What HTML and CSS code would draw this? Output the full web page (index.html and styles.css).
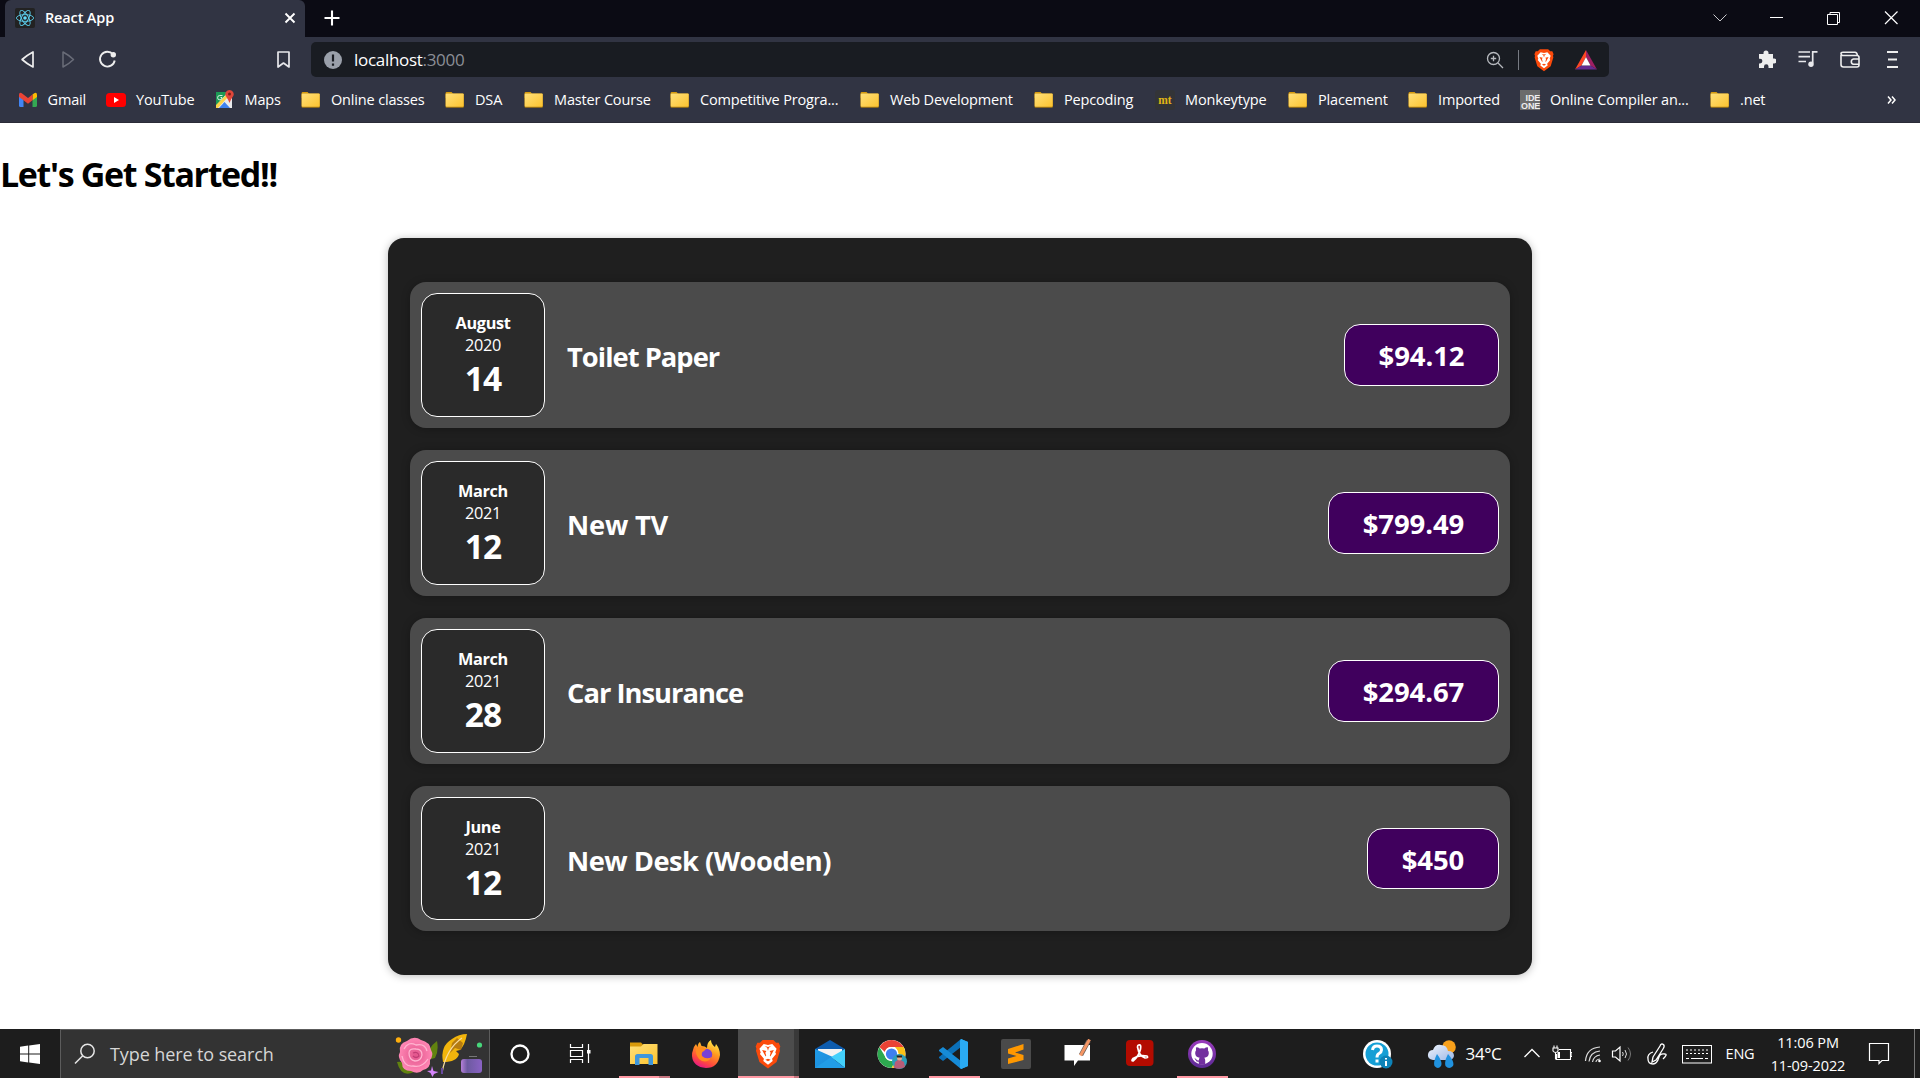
FILE: index.html
```html
<!DOCTYPE html>
<html lang="en">
<head>
<meta charset="utf-8">
<title>React App</title>
<link rel="stylesheet" href="styles.css">
</head>
<body>
<svg class="defs" width="0" height="0">
  <defs>
    <linearGradient id="gFolder" x1="0" y1="0" x2="1" y2="1"><stop offset="0" stop-color="#ffe07a"/><stop offset="1" stop-color="#fcc32f"/></linearGradient>
    <linearGradient id="gFox" x1=".8" y1="0" x2=".3" y2="1"><stop offset="0" stop-color="#fff44f"/><stop offset=".4" stop-color="#ff9a1f"/><stop offset=".75" stop-color="#ff4a3d"/><stop offset="1" stop-color="#e3168a"/></linearGradient>
    <linearGradient id="gMail" x1="0" y1="0" x2="1" y2="1"><stop offset="0" stop-color="#1f9be8"/><stop offset="1" stop-color="#1b8ad8"/></linearGradient>
    <linearGradient id="gHub" x1="0" y1="0" x2="0" y2="1"><stop offset="0" stop-color="#9a3bbd"/><stop offset="1" stop-color="#5c2a94"/></linearGradient>
    <radialGradient id="gRose"><stop offset="0" stop-color="#e2558c"/><stop offset="1" stop-color="#ff86b4"/></radialGradient>
    <linearGradient id="gInk" x1="0" y1="0" x2="1" y2="0"><stop offset="0" stop-color="#b57fd9"/><stop offset=".3" stop-color="#6d5aa0"/><stop offset="1" stop-color="#8a62c4"/></linearGradient>
    <linearGradient id="gCloud" x1="0" y1="0" x2="1" y2="1"><stop offset="0" stop-color="#eef4fc"/><stop offset="1" stop-color="#9fb8e6"/></linearGradient>
    <symbol id="folder" viewBox="0 0 20 20"><path d="M.6 3.200Q.6 2 1.800 2H6.600L8.300 4V8H.6z" fill="#d99c0b"/><rect x=".5" y="3.600" width="18.400" height="14.200" rx="1.200" fill="#a97a12"/><rect x=".7" y="3.600" width="18" height="13.200" rx="1" fill="url(#gFolder)"/></symbol>
    <symbol id="lion" viewBox="0 0 24 28"><path d="M7 1H17L19.500 3.500 22 3.500 23.500 7 22.800 9 23.200 11 20 21.500 12 27.500 4 21.500.8 11 1.200 9 .5 7 2 3.500 4.500 3.500z" fill="#fb4a0b"/><path d="M12 5.500 8 4.700 4 9 5.200 12.500 4.500 14 8.200 18.500 7.600 20.500 12 24 16.400 20.500 15.800 18.500 19.500 14 18.800 12.500 20 9 16 4.700z" fill="#fff"/><path d="M6.500 10.300 10.500 11.300 9.500 12.800 10.300 15.500 9.800 16.300 8 13zM17.500 10.300 13.500 11.300 14.500 12.800 13.700 15.500 14.200 16.300 16 13zM9.500 19.300 12 18.500 14.500 19.300 12 20.800zM9 6.600 12 7.400 15 6.600 12.800 8.200 12 11 11.200 8.200z" fill="#fb4a0b"/></symbol>
  </defs>
</svg>

<header class="titlebar">
  <div class="tab">
    <svg class="tab-logo" viewBox="0 0 20 20"><rect width="20" height="20" rx="2" fill="#222"/><g fill="none" stroke="#5ccfee" stroke-width=".9"><ellipse cx="10" cy="10" rx="8.600" ry="3.400"/><ellipse cx="10" cy="10" rx="8.600" ry="3.400" transform="rotate(60 10 10)"/><ellipse cx="10" cy="10" rx="8.600" ry="3.400" transform="rotate(120 10 10)"/></g><circle cx="10" cy="10" r="1.800" fill="#61dafb"/></svg>
    <span class="tab-title">React App</span>
    <svg class="tab-close" viewBox="0 0 12 12"><path d="M1.500 1.500 10.500 10.500M10.500 1.500 1.500 10.500" stroke="#fff" stroke-width="1.900"/></svg>
  </div>
  <svg class="new-tab" viewBox="0 0 16 16"><path d="M8 .5V15.500M.5 8H15.500" stroke="#fff" stroke-width="2.100"/></svg>
  <div class="window-buttons">
    <svg viewBox="0 0 16 16"><path d="M1.500 4.500 8 11 14.500 4.500" fill="none" stroke="#c8c8cc"/></svg>
    <svg viewBox="0 0 16 16"><path d="M1 7.500H14" stroke="#fff"/></svg>
    <svg viewBox="0 0 16 16"><path d="M1.500 4.500H11.500V14.500H1.500zM4 4V2.500H13.500V12.500H12" fill="none" stroke="#fff"/></svg>
    <svg viewBox="0 0 16 16"><path d="M2 1.500 14.500 14M14.500 1.500 2 14" stroke="#fff" stroke-width="1.200"/></svg>
  </div>
</header>

<nav class="toolbar">
  <div class="nav-buttons">
    <svg viewBox="0 0 20 20"><path d="M15 2V17Q8.500 13.500 4.100 9.500 8.500 5.500 15 2z" fill="none" stroke="#eee" stroke-width="1.700" stroke-linejoin="round"/></svg>
    <svg viewBox="0 0 20 20"><path d="M5 2V17Q11.500 13.500 15.500 9.500 11.500 5.500 5 2z" fill="none" stroke="#696c78" stroke-width="1.500" stroke-linejoin="round"/></svg>
    <svg viewBox="0 0 20 20"><path d="M15 4.300A7.400 7.400 0 1 0 16.700 10.500" fill="none" stroke="#eee" stroke-width="1.900"/><circle cx="15.300" cy="4.700" r="2.700" fill="#eee"/></svg>
    <svg class="bookmark-toggle" viewBox="0 0 20 20"><path d="M4 2H15V17L9.500 13 4 17z" fill="none" stroke="#e8e8ec" stroke-width="1.700" stroke-linejoin="round"/></svg>
  </div>
  <div class="address">
    <svg class="info" viewBox="0 0 18 18"><circle cx="9" cy="9" r="9" fill="#9aa0aa"/><path d="M9 3.500V10.500M9 12.500V14.800" stroke="#191c22" stroke-width="2.200"/></svg>
    <span class="url">localhost<span class="port">:3000</span></span>
    <svg class="magnifier" viewBox="0 0 18 18"><g fill="none" stroke="#b6b9be" stroke-width="1.300"><circle cx="7.500" cy="7.500" r="6"/><path d="M12 12 17 17M7.500 4.800V10.200M4.800 7.500H10.200"/></g></svg>
    <span class="divider"></span>
    <svg class="shields"><use href="#lion"/></svg>
    <svg class="bat" viewBox="0 0 22 20"><path d="M11 0 0 19.500 6.500 15.500 11 7z" fill="#ff4724"/><path d="M11 0 22 19.500 15.500 15.500 11 7z" fill="#9e1f63"/><path d="M0 19.500 6.500 15.500H15.500L22 19.500z" fill="#662d91"/><path d="M11 7 15.500 15.500H6.500z" fill="#fff"/></svg>
  </div>
  <div class="extensions">
    <svg viewBox="0 0 20 20"><path d="M3 4H7.500V3A2.500 2.500 0 0 1 12.500 3V4H17V8.500H18A2.500 2.500 0 0 1 18 13.500H17V18H12.500V16.500A2.200 2.200 0 0 0 8 16.500V18H3V13.500H4A2.300 2.300 0 0 0 4 8.700H3z" fill="#eee"/></svg>
    <svg viewBox="0 0 20 20"><path d="M.5 2H12M.5 6.700H12M.5 11.500H8M14.700 13.500V1.800H19.500" fill="none" stroke="#e8e8ec" stroke-width="1.700"/><circle cx="13" cy="14.200" r="2.700" fill="#e8e8ec"/></svg>
    <svg viewBox="0 0 20 20"><path d="M1 5V14.500Q1 17 3.500 17H17Q19 17 19 15V7.500Q19 5.500 17 5.500H2.500Q1 5 1 3.800 1 2.300 3 2.300H15Q17 2.300 17.500 5.500M19 9H13.500A2.700 2.700 0 0 0 13.500 14.300H19" fill="none" stroke="#eee" stroke-width="1.600"/></svg>
    <svg viewBox="0 0 20 20"><path d="M5 2H16M6 9.500H15M5 17H16" stroke="#eee" stroke-width="1.800"/></svg>
  </div>
</nav>

<nav class="bookmarks">
  <a class="bm near"><svg viewBox="0 0 20 20"><path d="M0 4.500 4.500 8V17H1.500Q0 17 0 15.500z" fill="#4285f4"/><path d="M18 4.500 13.500 8V17H16.500Q18 17 18 15.500z" fill="#34a853"/><path d="M13.500 4.500 15.200 3.200Q18 2 18 5V7L13.500 10.300z" fill="#fbbc04"/><path d="M0 7V5Q0 2 2.800 3.200L9 8 13.500 4.500V10.300L9 13.700 4.500 10.300z" fill="#ea4335"/></svg><span>Gmail</span></a>
  <a class="bm"><svg viewBox="0 0 20 20"><rect y="3" width="20" height="14" rx="3.500" fill="#f00"/><path d="M8 7 13 10 8 13z" fill="#fff"/></svg><span>YouTube</span></a>
  <a class="bm near"><svg viewBox="0 0 20 20"><rect y="2" width="16" height="16" fill="#e8eaed"/><path d="M0 2H12L0 16z" fill="#1c9a55"/><path d="M0 15 12 3V7L2 18H0z" fill="#fcd34a"/><path d="M3 18 8.500 12 14 18z" fill="#3f82f0"/><path d="M6.500 5.500H3.800A2.200 2.200 0 1 0 6 7.500H4.500" fill="none" stroke="#d9f0e2"/><path d="M13.500 0A4.200 4.200 0 0 1 17.500 5.500Q14.500 10 13.500 13 12.500 10 9.500 5.500A4.200 4.200 0 0 1 13.500 0" fill="#e0473a"/><circle cx="13.500" cy="4" r="1.500" fill="#7d1e18"/></svg><span>Maps</span></a>
  <a class="bm"><svg><use href="#folder"/></svg><span>Online classes</span></a>
  <a class="bm"><svg><use href="#folder"/></svg><span>DSA</span></a>
  <a class="bm"><svg><use href="#folder"/></svg><span>Master Course</span></a>
  <a class="bm"><svg><use href="#folder"/></svg><span>Competitive Progra...</span></a>
  <a class="bm"><svg><use href="#folder"/></svg><span>Web Development</span></a>
  <a class="bm"><svg><use href="#folder"/></svg><span>Pepcoding</span></a>
  <a class="bm"><b class="mt">mt</b><span>Monkeytype</span></a>
  <a class="bm"><svg><use href="#folder"/></svg><span>Placement</span></a>
  <a class="bm"><svg><use href="#folder"/></svg><span>Imported</span></a>
  <a class="bm"><b class="ideone"><i>IDE</i><i>ONE</i></b><span>Online Compiler an...</span></a>
  <a class="bm"><svg><use href="#folder"/></svg><span>.net</span></a>
  <svg class="overflow" viewBox="0 0 10 10"><path d="M1 1.500 4 5 1 8.500M5 1.500 8 5 5 8.500" fill="none" stroke="#fff" stroke-width="1.500"/></svg>
</nav>

<main class="page">
  <h1>Let's Get Started!!</h1>
  <section class="expenses">
    <article class="item">
      <div class="date"><div class="month">August</div><div class="year">2020</div><div class="day">14</div></div>
      <h2 class="tight">Toilet Paper</h2><div class="price w6">$94.12</div>
    </article>
    <article class="item">
      <div class="date"><div class="month">March</div><div class="year">2021</div><div class="day">12</div></div>
      <h2 class="loose">New TV</h2><div class="price w7">$799.49</div>
    </article>
    <article class="item">
      <div class="date"><div class="month">March</div><div class="year">2021</div><div class="day">28</div></div>
      <h2 class="tight">Car Insurance</h2><div class="price w7">$294.67</div>
    </article>
    <article class="item">
      <div class="date"><div class="month">June</div><div class="year">2021</div><div class="day">12</div></div>
      <h2>New Desk (Wooden)</h2><div class="price w4">$450</div>
    </article>
  </section>
</main>

<footer class="taskbar">
  <div class="start"><svg width="20" height="20" viewBox="0 0 20 20"><path d="M0 2.800 8.200 1.600V9.400H0zM9.200 1.500 20 0V9.400H9.200zM0 10.500H8.200V18.400L0 17.200zM9.200 10.500H20V20L9.200 18.500z" fill="#fff"/></svg></div>
  <div class="search">
    <svg width="22" height="22" viewBox="0 0 22 22"><circle cx="13.500" cy="8" r="6.700" fill="none" stroke="#e6e6e6" stroke-width="1.500"/><path d="M8.700 12.800 1 20.500" stroke="#e6e6e6" stroke-width="1.500"/></svg>
    <span>Type here to search</span>
    <svg class="flowers" width="90" height="46" viewBox="0 0 90 46"><circle cx="4.500" cy="9" r="2.700" fill="#ffae0d"/><circle cx="85.500" cy="14" r="2.600" fill="#47d77b"/><path d="M43 10Q45 20 41 27L33 29Q33 17 43 10M3 31Q12 29 20 41 7 47 3 31" fill="#61820f"/><path d="M13 10Q20 4 27 9 36 11 37 19 40 24 36 29 37 37 29 39 24 44 17 40 8 40 8 32 3 26 6 21 4 13 13 10" fill="url(#gRose)"/><g fill="none" stroke="#ffb4d0" stroke-width="1.300"><path d="M10 18Q14 10 22 14 31 12 33 20M8 25Q10 36 19 35 28 37 34 28M15 22Q15 17 22 18 28 18 28 24 27 30 21 30 15 29 15 22"/></g><path d="M19 22Q24 20 25 25 22 28 19 25" fill="none" stroke="#c23c75" stroke-width="1.200"/><path d="M38 35 39.500 40 44.500 41 40 43 38.500 46 36.500 42 33 40 37 39.500z" fill="#d585fb"/><path d="M49 31Q46 15 58 8 65 3 73 3 71 14 66 19L62 20 65 23Q63 31 49 31" fill="#f2b50c"/><path d="M58 12 63 7 69 12 67 19 61 17 56 22z" fill="#b67c10"/><path d="M68 7Q52 18 48 42" fill="none" stroke="#f8dda0" stroke-width="1.200"/><path d="M48 37V43" stroke="#694aa0" stroke-width="2"/><path d="M75 25.500H83" stroke="#777"/><rect x="67" y="28" width="21" height="14" rx="3" fill="url(#gInk)"/></svg>
  </div>
  <div class="apps">
    <div class="app"><svg viewBox="0 0 30 30"><circle cx="15" cy="15" r="8.500" fill="none" stroke="#fff" stroke-width="2.300"/></svg></div>
    <div class="app"><svg viewBox="0 0 30 30"><path d="M3.500 5V8.500H15.500V5M3.500 24V20.500H15.500V24M3.500 11.500H15.500V17.500H3.500zM21.500 5V24" fill="none" stroke="#fff" stroke-width="1.200"/><rect x="20" y="11" width="3.500" height="3.500" fill="#fff"/></svg></div>
    <div class="app open split"><svg viewBox="0 0 30 30"><path d="M1 3.500H12L14 5.500V8H1z" fill="#d99a0a"/><path d="M1 7.500H12L14.500 5H28.500V25H1z" fill="url(#gFolder)"/><path d="M6 26V17.500Q6 15 8.500 15H21.500Q24 15 24 17.500V26H19.500V19H10.500V26z" fill="#3f97dc"/></svg></div>
    <div class="app"><svg viewBox="0 0 30 30"><path d="M2 11Q3 7 5 5L6.500 8Q7 4 9 3L10.500 7Q14 7 16 9 16 3 20 1 20 5 24 8L25 5Q29 10 29 16 27 29 15 29 2 28 1 17 1 13 2 11" fill="url(#gFox)"/><circle cx="15.500" cy="15.500" r="5.700" fill="#7841d5"/><path d="M5 9Q10 6 15 10L13 12Q10 13 11 17 15 21 21 18 15 26 8 20 4 15 5 9" fill="#ff8b20"/></svg></div>
    <div class="app open active"><svg viewBox="0 0 30 30"><use href="#lion" x="2" y="0" width="26" height="30"/></svg></div>
    <div class="app"><svg viewBox="0 0 30 30"><path d="M0 10 15 1 30 10 20 18H10z" fill="#0d5cae"/><path d="M3 10H27V17L15 22 3 17z" fill="#f3f3f3"/><path d="M0 10 20 19 15 29H0z" fill="url(#gMail)"/><path d="M30 10V29L16 18z" fill="#43d0fb"/><path d="M0 29 16 18 30 29z" fill="#219de7"/></svg></div>
    <div class="app"><svg viewBox="0 0 30 30"><circle cx="14.500" cy="15" r="14" fill="#fff"/><path d="M2.400 8A14 14 0 0 1 26.600 8H14.500Q9 8 8 13z" fill="#ea4335"/><path d="M26.600 8A14 14 0 0 1 14.500 29L20.700 18.500Q23 13 18 8z" fill="#fbc116"/><path d="M2.400 8A14 14 0 0 0 14.500 29L19 20Q11 24 8.400 18z" fill="#2da94f"/><circle cx="14.500" cy="15" r="7" fill="#fff"/><circle cx="14.500" cy="15" r="5.600" fill="#3f7ff0"/><circle cx="22.500" cy="22.500" r="7.500" fill="#2c9fba"/><path d="M17 29 18 23 22 20 27 23 28 28Q23 31 17 29" fill="#b85d78"/><circle cx="22.500" cy="19" r="2.500" fill="#e8a988"/><path d="M19.500 16.500H25V18.500H20z" fill="#222"/></svg></div>
    <div class="app open"><svg viewBox="0 0 30 30"><path d="M22 0 29 3V27L22 30z" fill="#29adf5"/><path d="M22 0V8L4 22 0 19V18z" fill="#0b70b8"/><path d="M22 30V22L4 8 0 11V12z" fill="#168bd7"/><path d="M22 0 29 3V27L22 30 21 28.500V1.500z" fill="#2aaaf2"/></svg></div>
    <div class="app"><svg viewBox="0 0 30 30"><rect width="30" height="30" rx="2" fill="#4a4a4a"/><path d="M7 10 22.500 5V10.500L14 13.500 22.500 16V21L7 25V19.500L15.500 17 7 14.500z" fill="#ff9800"/></svg></div>
    <div class="app"><svg viewBox="0 0 30 30"><path d="M1.500 6H27V21.500H15L11 27V21.500H1.500z" fill="#fff"/><path d="M25.500 2 18 16" stroke="#6c625c" stroke-width="4.500"/><path d="M26.500.5 17.500 16.500" stroke="#f69664" stroke-width="3"/></svg></div>
    <div class="app"><svg viewBox="0 0 30 30"><rect x="1" y="1" width="27.500" height="26" rx="4" fill="#b30b00"/><path d="M13.500 6Q16.500 5 15.500 10 14 17 8 22 6 22 8 19.500 14 15.500 22 17 24 19 20 19 14 17 12.500 8 12.500 6.500 13.500 6" fill="none" stroke="#fff" stroke-width="1.700"/></svg></div>
    <div class="app open"><svg viewBox="0 0 30 30"><circle cx="15" cy="15" r="14" fill="url(#gHub)"/><circle cx="15" cy="14.700" r="10.700" fill="#fff"/><path d="M9.200 8.200Q11 8 12.700 9.500 15 9 17.300 9.500 19 8 20.800 8.200 21.300 10 20.900 11.200 22 12.500 21.800 14.500 21.500 18.200 17.300 18.700 18.200 19.700 18.200 21.200V25.800H11.800V22.800Q9.500 23.200 8.600 21 8 20 7.200 19.600 8.800 19.200 9.800 21 10.500 21.800 11.900 21.300 11.900 19.500 12.700 18.700 8.500 18.200 8.200 14.500 8 12.500 9.100 11.200 8.700 10 9.200 8.200z" fill="#72309f"/></svg></div>
  </div>
  <div class="tray">
    <svg width="30" height="30" viewBox="0 0 30 30"><circle cx="14" cy="15" r="14" fill="#fff"/><circle cx="14" cy="15" r="11.500" fill="#159fd5"/><path d="M9.500 11Q10 7 14 7 18.500 7 18.500 11 18.500 13 16 14.500 14 15.500 14 18.500M14 20.500V23.500" fill="none" stroke="#fff" stroke-width="3"/><circle cx="23" cy="23" r="6.500" fill="#0d83b8"/><path d="M23 19V20.500M23 22V27" stroke="#fff" stroke-width="2"/></svg>
    <div class="weather"><svg width="30" height="30" viewBox="0 0 30 30"><circle cx="22" cy="8" r="6.800" fill="#f9a11b"/><path d="M6 21Q0 20 1 15 2 11 6 11 8 5 14 6 20 6 21 12 27 12 27 17 26 21 22 21z" fill="url(#gCloud)"/><path d="M10 15Q16 23 14 27 11 31 7.500 27 6 23 10 15M21 15Q28 23 26 27 22 31 18.500 27 17 22 21 15" fill="#2092df"/></svg><span>34°C</span></div>
    <svg width="18" height="18" viewBox="0 0 18 18"><path d="M1.500 12 9 4.500 16.500 12" fill="none" stroke="#fff" stroke-width="1.300"/></svg>
    <svg width="20" height="20" viewBox="0 0 20 20"><g fill="none" stroke="#fff" stroke-width="1.100"><path d="M7 5.500H18.500V15.500H4.500V10M18.500 8.500H20V12.500H18.500M1 4H6V7Q3.500 10 1 7zM2 1.500V4M5 1.500V4M3.500 8.500V15.500"/></g><path d="M5.500 8H8V14H5.500z" fill="#fff"/></svg>
    <svg width="18" height="20" viewBox="0 0 18 20"><g fill="none" stroke="#ddd" stroke-width="1.200"><path d="M1.500 17Q2.500 4 16 3M5 17.500Q6 8 16 7M8.500 18Q9.500 12 16 11M12 18Q12 15.500 16 15"/></g><circle cx="15.500" cy="17" r="1.300" fill="#fff"/></svg>
    <svg width="22" height="20" viewBox="0 0 22 20"><path d="M1.500 7V13H4.500L9 17V3L4.500 7z" fill="none" stroke="#fff" stroke-width="1.200"/><path d="M11.500 8Q13 10 11.500 12M14 6Q17 10 14 14" fill="none" stroke="#ddd"/><path d="M17 3.500Q22 10 17 16.500" fill="none" stroke="#777"/></svg>
    <svg width="22" height="24" viewBox="0 0 22 24"><path d="M7 15 14 4Q15 1 17.500 2.500 19 4 17 7L10 18 6 20zM7 10Q1 12 2 17 2 22 7 22 11 22 13 15 14 11 19 12 22 12 17 17" fill="none" stroke="#fff" stroke-width="1.300"/></svg>
    <svg width="30" height="20" viewBox="0 0 30 20"><rect x=".5" y="1.500" width="29" height="17.500" fill="none" stroke="#fff"/><path d="M4 6H26M4 9.500H26" stroke="#fff" stroke-dasharray="2 2"/><path d="M4 14.500H7M9 14.500H21M23 14.500H26" stroke="#fff"/></svg>
    <span class="lang">ENG</span>
    <div class="clock"><span class="time">11:06 PM</span><span class="today">11-09-2022</span></div>
    <svg width="22" height="24" viewBox="0 0 22 24"><path d="M1.500 1.500H20.500V18.500H14L11 21.500V18.500H1.500z" fill="none" stroke="#fff" stroke-width="1.200"/></svg>
    <span class="peek"></span>
  </div>
</footer>
</body>
</html>
```
FILE: styles.css
```css
* { box-sizing: border-box; }
body {
  margin: 0; height: 1078px; overflow: hidden; background: #fff;
  display: flex; flex-direction: column;
  font-family: "Open Sans", "Noto Sans", sans-serif;
}
svg { display: block; flex: none; }
.defs { position: absolute; }

.titlebar { height: 37px; background: #0b0b14; display: flex; align-items: center; padding-left: 5px; }
.tab { width: 300px; height: 37px; background: #313443; border-radius: 6px 6px 0 0; display: flex; align-items: center; padding: 0 9px 2px 10px; }
.tab-logo { width: 20px; height: 20px; }
.tab-title { margin-left: 10px; color: #fff; font-size: 14.5px; font-weight: 600; letter-spacing: -.15px; flex: 1; }
.tab-close { width: 12px; height: 12px; }
.new-tab { width: 16px; height: 16px; margin: 0 0 2px 19px; }
.window-buttons { margin: 0 21px 2px auto; display: flex; gap: 41px; }
.window-buttons svg { width: 16px; height: 16px; }

.toolbar { height: 45px; background: #313443; display: flex; padding-top: 5px; }
.nav-buttons { width: 311px; height: 35px; display: flex; align-items: center; gap: 20px; padding-left: 18px; }
.nav-buttons svg { width: 20px; height: 20px; }
.nav-buttons .bookmark-toggle { margin-left: auto; margin-right: 17px; }
.address { width: 1298px; height: 35px; border-radius: 5px; background: #191c22; display: flex; align-items: center; padding: 0 12px 0 13px; }
.info { width: 18px; height: 18px; }
.url { margin-left: 12px; flex: 1; color: #fff; font-size: 17px; letter-spacing: -.3px; }
.port { color: #8b8e96; }
.magnifier { width: 18px; height: 18px; }
.divider { width: 1px; height: 20px; background: #777b83; margin: 0 15px 0 14px; }
.shields { width: 20px; height: 24px; }
.bat { width: 22px; height: 20px; margin-left: 21px; }
.extensions { flex: 1; height: 35px; display: flex; align-items: center; justify-content: flex-end; gap: 22px; padding-right: 18px; }
.extensions svg { width: 20px; height: 20px; }

.bookmarks {
  height: 41px; background: #313443; border-bottom: 1px solid #2a2b37; padding: 0 0 5px 19px;
  display: grid; align-items: center; color: #fff; font-size: 14.5px;
  grid-template-columns: 87px 110px 85px 144px 79px 146px 190px 174px 121px 133px 120px 112px 190px 177px 10px;
}
.bm { display: flex; align-items: center; gap: 10px; white-space: nowrap; letter-spacing: -.16px; }
.near { gap: 8.5px; }
.bm > svg { width: 20px; height: 20px; }
.mt, .ideone { width: 20px; height: 20px; flex: none; }
.mt { background: #333437; border-radius: 3px; color: #e2b714; font: bold 11.5px/20px "Liberation Serif", serif; text-align: center; letter-spacing: 0; }
.ideone { background: #6b6b6b; color: #eee; font: bold 9px/8px "Liberation Sans", sans-serif; text-align: right; padding-top: 4px; letter-spacing: -.2px; }
.ideone i { display: block; font-style: normal; }
.overflow { width: 10px; height: 10px; }

.page { flex: 1; min-height: 0; }
h1 { margin: 0; padding: 28px 0 0; height: 115px; font-size: 34px; line-height: 47px; font-weight: 700; letter-spacing: -1.35px; color: #000; }
.expenses { width: 1144px; height: 737px; margin: 0 auto; padding: 44px 22px; background: #1f1f1f; border-radius: 16px; box-shadow: 0 1px 9px rgba(0,0,0,.27); display: flex; flex-direction: column; gap: 22px; }
.item { height: 146px; padding: 11px; background: #4b4b4b; border-radius: 16px; box-shadow: 0 1px 9px rgba(0,0,0,.27); display: flex; align-items: center; color: #fff; }
.item:last-child { height: 145px; }
.date { width: 124px; height: 100%; border: 1px solid #fff; border-radius: 16px; background: #2a2a2a; text-align: center; padding-top: 18px; }
.month { font-size: 16.3px; font-weight: 700; line-height: 22px; letter-spacing: -.35px; }
.year { font-size: 16.3px; line-height: 22px; letter-spacing: -.3px; }
.day { font-size: 33.5px; font-weight: 700; line-height: 45px; letter-spacing: -1px; }
h2 { flex: 1; margin: 4px 0 0 22px; font-size: 27.3px; line-height: 36px; font-weight: 700; letter-spacing: -.52px; }
.tight { letter-spacing: -.97px; }
.loose { letter-spacing: -.2px; }
.price { height: 62px; border: 1px solid #fff; border-radius: 16px; background: #40005d; font-size: 27.5px; font-weight: 700; line-height: 62px; text-align: center; letter-spacing: -.1px; }
.item:last-child .price { height: 61px; }
.w6 { width: 155px; }
.w7 { width: 171px; }
.w4 { width: 132px; }

.taskbar { height: 49px; background: #1d1d1d; display: flex; }
.start { width: 60px; display: flex; align-items: center; justify-content: center; }
.search { width: 430px; background: #333; border: 1px solid #5c5c5c; border-bottom: 0; display: flex; align-items: center; padding: 0 5px 0 13px; color: #d6d6d6; font-size: 18px; }
.search span { margin-left: 14px; flex: 1; letter-spacing: -.1px; }
.apps { display: grid; grid-template-columns: 60px 63px; grid-auto-columns: 62px; grid-auto-flow: column; }
.app { display: flex; align-items: center; justify-content: center; position: relative; }
.app svg { width: 30px; height: 30px; }
.open::after { content: ""; position: absolute; bottom: 0; left: 6px; width: 51px; height: 2px; background: #ff99a4; }
.split::after { background: linear-gradient(90deg, #ff99a4 40px, #c67680 40px); }
.active { background: linear-gradient(90deg, #1d1d1d 1px, #4c4c4c 1px 57px, #393939 57px); }
.active::after { left: 1px; width: 61px; background: linear-gradient(90deg, #ff99a4 56px, #c67680 56px); }
.tray { flex: 1; display: grid; align-items: center; justify-items: center; color: #fff; padding-left: 114px; grid-template-columns: 62px 110px 25px 36px 26px 32px 38px 42px 44px 92px 50px 16px; }
.tray > *, .weather span { white-space: nowrap; }
.weather { display: flex; align-items: center; gap: 9px; font-size: 17px; letter-spacing: -.4px; }
.lang { font-size: 14.5px; letter-spacing: -.2px; }
.clock { display: flex; flex-direction: column; align-items: center; font-size: 14.5px; line-height: 23px; letter-spacing: -.1px; }
.peek { width: 1px; height: 49px; background: #777; justify-self: start; margin-left: 10px; }
```
